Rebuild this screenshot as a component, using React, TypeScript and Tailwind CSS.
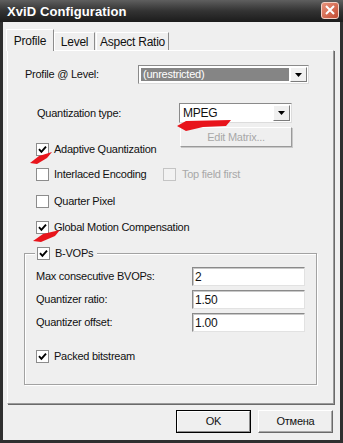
import React, { FC } from "react";

const Check: FC<{ checked?: boolean; disabled?: boolean }> = ({ checked, disabled }) => (
	<div
		className={`w-[13px] h-[13px] shrink-0 border flex items-center justify-center ${
			disabled ? "border-[#c4c4c4] bg-[#f2f2f2]" : "border-[#8c8c8c] bg-white"
		}`}
	>
		{checked && (
			<svg width="9" height="9" viewBox="0 0 9 9">
				<path d="M1 4.2 L3.4 6.8 L8 1.6" fill="none" stroke="#000" strokeWidth="1.9" />
			</svg>
		)}
	</div>
);

const ArrowBtn: FC = () => (
	<div className="w-[17px] h-full shrink-0 bg-[#f0f0f0] border border-t-white border-l-white border-r-[#7c7c7c] border-b-[#7c7c7c] flex items-center justify-center">
		<svg width="7" height="4" viewBox="0 0 7 4">
			<path d="M0 0h7L3.5 4z" fill="#000" />
		</svg>
	</div>
);

const Field: FC<{ value: string }> = ({ value }) => (
	<div className="w-[113px] h-[19px] bg-white border border-t-[#8a8a8a] border-l-[#8a8a8a] border-r-[#e2e2e2] border-b-[#e2e2e2] shadow-[inset_1px_1px_0_#c8c8c8] flex items-center pl-[2px] text-[12px]">
		{value}
	</div>
);

const CheckRow: FC<{ label: string; checked?: boolean; className?: string }> = ({
	label,
	checked,
	className = "",
}) => (
	<div className={`flex items-center h-[13px] ml-[28px] ${className}`}>
		<Check checked={checked} />
		<span className="ml-[5px]">{label}</span>
	</div>
);

const App: FC = () => {
	return (
		<div className="relative w-[343px] h-[443px] bg-[#2f2f2f] flex flex-col font-['Liberation_Sans',Arial,sans-serif] text-[11px] text-[#111] overflow-hidden leading-none">
			{/* Title bar */}
			<div className="h-[22px] shrink-0 flex items-center pl-[7px] pr-[4px] bg-gradient-to-b from-[#5f5f5f] via-[#333333] to-[#1c1c1c]">
				<span className="text-white font-bold text-[13px] tracking-[0.1px]">XviD Configuration</span>
				<div className="ml-auto mb-[2px] w-[18px] h-[17px] rounded-[3px] border border-[#f2d0c4] bg-gradient-to-br from-[#e8937c] to-[#c24a30] flex items-center justify-center">
					<svg width="10" height="10" viewBox="0 0 10 10">
						<path d="M1 1L9 9M9 1L1 9" stroke="#fff" strokeWidth="2" />
					</svg>
				</div>
			</div>

			{/* Body */}
			<div className="flex-1 mx-[3px] mb-[3px] bg-[#efefef] flex flex-col tracking-[-0.25px]">
				{/* Tabs */}
				<div className="mt-[7px] ml-[3px] h-[21px] flex items-end">
					<div className="relative z-10 h-[22px] -mb-[1px] w-[48px] bg-[#efefef] border border-b-0 border-t-white border-l-white border-r-[#8c8c8c] flex items-center justify-center text-[12px]">
						Profile
					</div>
					<div className="h-[18px] w-[41px] bg-[#efefef] border border-b-0 border-t-white border-l-white border-r-[#8c8c8c] flex items-center justify-center text-[12px]">
						Level
					</div>
					<div className="h-[18px] w-[73px] ml-[1px] bg-[#efefef] border border-b-0 border-t-white border-l-white border-r-[#8c8c8c] flex items-center justify-center text-[12px]">
						Aspect Ratio
					</div>
				</div>

				{/* Tab panel */}
				<div className="ml-[4px] w-[327px] h-[354px] border border-t-white border-l-white border-r-[#9a9a9a] border-b-[#9a9a9a] shadow-[1px_1px_0_#6a6a6a] flex flex-col">
					{/* Profile @ Level */}
					<div className="mt-[14px] ml-[17px] h-[19px] flex items-center">
						<span className="w-[113px]">Profile @ Level:</span>
						<div className="w-[171px] h-[19px] border border-t-[#8a8a8a] border-l-[#8a8a8a] border-r-[#dcdcdc] border-b-[#dcdcdc] bg-white flex p-[1px]">
							<div className="flex-1 bg-[#858585] border border-white text-white flex items-center pl-[2px]">
								(unrestricted)
							</div>
							<ArrowBtn />
						</div>
					</div>

					{/* Quantization type */}
					<div className="mt-[19px] ml-[29px] h-[20px] flex items-center">
						<span className="w-[142px]">Quantization type:</span>
						<div className="w-[113px] h-[20px] border border-t-[#8a8a8a] border-l-[#8a8a8a] border-r-[#dcdcdc] border-b-[#dcdcdc] bg-white flex p-[1px]">
							<div className="flex-1 flex items-center pl-[2px] text-[12px]">MPEG</div>
							<ArrowBtn />
						</div>
					</div>

					{/* Edit matrix */}
					<div className="mt-[4px] ml-[172px] w-[112px] h-[20px] border border-t-white border-l-white border-r-[#9a9a9a] border-b-[#9a9a9a] shadow-[1px_1px_0_#c8c8c8] flex items-center justify-center text-[#a8a8a8]">
						Edit Matrix...
					</div>

					<CheckRow label="Adaptive Quantization" checked className="-mt-[4px]" />

					<div className="mt-[12px] ml-[28px] h-[13px] flex items-center">
						<Check />
						<span className="ml-[5px] w-[109px]">Interlaced Encoding</span>
						<Check disabled />
						<span className="ml-[6px] text-[#a8a8a8]">Top field first</span>
					</div>

					<CheckRow label="Quarter Pixel" className="mt-[14px]" />
					<CheckRow label="Global Motion Compensation" checked className="mt-[13px]" />

					{/* B-VOPs group */}
					<div className="mt-[19px] ml-[16px] w-[293px] h-[132px] border border-[#a2a2a2] shadow-[inset_1px_1px_0_#fff,1px_1px_0_#fff] flex flex-col">
						<div className="-mt-[7px] ml-[10px] self-start h-[13px] px-[2px] bg-[#efefef] flex items-center">
							<Check checked />
							<span className="ml-[5px] mr-[2px]">B-VOPs</span>
						</div>
						<div className="mt-[7px] ml-[11px] flex items-center">
							<span className="w-[156px]">Max consecutive BVOPs:</span>
							<Field value="2" />
						</div>
						<div className="mt-[4px] ml-[11px] flex items-center">
							<span className="w-[156px]">Quantizer ratio:</span>
							<Field value="1.50" />
						</div>
						<div className="mt-[4px] ml-[11px] flex items-center">
							<span className="w-[156px]">Quantizer offset:</span>
							<Field value="1.00" />
						</div>
						<div className="mt-[18px] ml-[11px] h-[13px] flex items-center">
							<Check checked />
							<span className="ml-[5px]">Packed bitstream</span>
						</div>
					</div>
				</div>

				{/* Buttons */}
				<div className="mt-[6px] mr-[7px] flex justify-end gap-[7px]">
					<div className="w-[75px] h-[23px] border border-black bg-[#efefef] flex">
						<div className="flex-1 border border-t-white border-l-white border-r-[#8c8c8c] border-b-[#8c8c8c] flex items-center justify-center">
							OK
						</div>
					</div>
					<div className="w-[75px] h-[23px] border border-t-white border-l-white border-r-[#6a6a6a] border-b-[#6a6a6a] shadow-[inset_-1px_-1px_0_#a8a8a8] bg-[#efefef] flex items-center justify-center">
						Отмена
					</div>
				</div>
			</div>

			{/* Red hand-drawn marks over the dialog */}
			<svg className="absolute inset-0 pointer-events-none" width="343" height="443" viewBox="0 0 343 443">
				<path d="M177 126 L186 121 L231 120 L226 126 L203 127 L186 131 Z" fill="#e8141b" />
				<path d="M30 163 L39 156 L52 152 L47 158 L37 164 Z" fill="#e8141b" />
				<path d="M33 241 L43 234 L60 230 L55 236 L41 242 Z" fill="#e8141b" />
			</svg>
		</div>
	);
};

export default App;
